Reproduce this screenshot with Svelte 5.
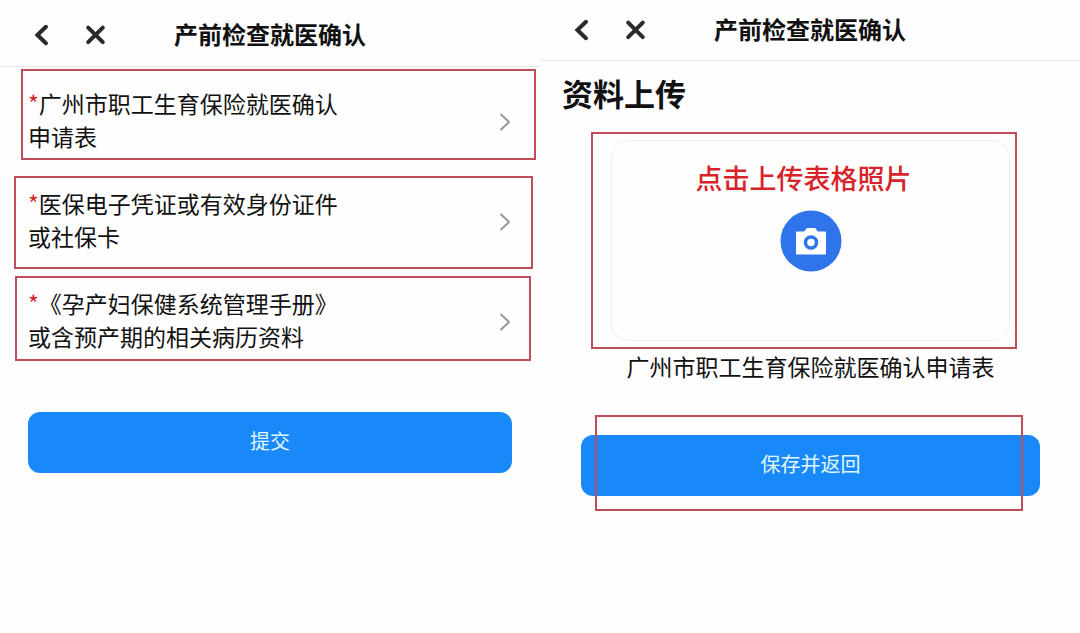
<script>
  const title = '产前检查就医确认';
  const documents = [
    { lines: ['广州市职工生育保险就医确认', '申请表'], mark: 'first' },
    { lines: ['医保电子凭证或有效身份证件', '或社保卡'], mark: 'second' },
    { lines: ['《孕产妇保健系统管理手册》', '或含预产期的相关病历资料'], mark: 'third' },
  ];
</script>

{#snippet bar()}
  <div class="nav">
    <button class="icon" type="button" aria-label="返回">
      <svg width="20" height="24" viewBox="0 0 20 24"><path d="M14 3.800 5.400 12 14 20.200" /></svg>
    </button>
    <button class="icon" type="button" aria-label="关闭">
      <svg width="24" height="24" viewBox="0 0 24 24"><path d="M4.200 4.600 18.800 19.200M18.800 4.600 4.200 19.200" /></svg>
    </button>
  </div>
  <h1>{title}</h1>
{/snippet}

<main>
  <section class="screen">
    <header class="tall">{@render bar()}</header>
    <ul>
      {#each documents as doc}
        <li>
          <button class="row" type="button">
            <span class="label">
              <span class="star">*</span>{doc.lines[0]}<br />{doc.lines[1]}
            </span>
            <svg class="chevron" width="14" height="20" viewBox="0 0 14 20"><path d="M2.500 2 11 10 2.500 18" /></svg>
          </button>
          <span class="mark {doc.mark}"></span>
        </li>
      {/each}
    </ul>
    <div class="submit">
      <button class="primary" type="button">提交</button>
    </div>
  </section>

  <section class="screen">
    <header>{@render bar()}</header>
    <h2>资料上传</h2>
    <figure>
      <div class="upload">
        <button class="card" type="button">
          <span class="hint">点击上传表格照片</span>
          <svg width="62" height="62" viewBox="0 0 62 62">
            <circle cx="31" cy="31" r="30.500" fill="#2f74ea" />
            <path fill="#fff" d="M17 21.500h6.500q1 0 1.500-1l1-1.500q.5-1 1.500-1h7q1 0 1.500 1l1 1.500q.5 1 1.500 1H45q1 0 1 1v21q0 1-1 1H17q-1 0-1-1v-21q0-1 1-1z" />
            <circle cx="31" cy="32.500" r="5.500" fill="#fff" stroke="#2f74ea" stroke-width="3.500" />
          </svg>
        </button>
        <span class="mark photo"></span>
      </div>
      <figcaption>广州市职工生育保险就医确认申请表</figcaption>
    </figure>
    <div class="save">
      <button class="primary" type="button">保存并返回</button>
      <span class="mark keep"></span>
    </div>
  </section>
</main>

<style>
  :global(body) {
    margin: 0;
    background: #fefefe;
  }
  main {
    display: grid;
    grid-template-columns: 1fr 1fr;
    min-height: 100vh;
    color: #111;
    font-family: 'Noto Sans CJK SC', sans-serif;
  }
  button {
    margin: 0;
    padding: 0;
    border: 0;
    background: none;
    color: inherit;
    font: inherit;
    cursor: pointer;
  }
  svg {
    display: block;
    flex: none;
  }
  header {
    display: grid;
    grid-template-columns: 1fr auto 1fr;
    align-items: center;
    height: 60px;
    border-bottom: 1px solid #e4e4e4;
  }
  .tall {
    height: 67px;
    padding-top: 4px;
    box-sizing: border-box;
  }
  .nav {
    display: flex;
    gap: 32px;
    padding-left: 32px;
  }
  .icon path {
    fill: none;
    stroke: #2a2a2a;
    stroke-width: 4;
    stroke-linecap: round;
  }
  h1 {
    margin: 0;
    padding-bottom: 2px;
    font-size: 24px;
    line-height: 36px;
    font-weight: 700;
  }
  ul {
    margin: 0;
    padding: 5px 0 0;
    list-style: none;
  }
  li,
  .upload,
  .save {
    position: relative;
  }
  .row {
    display: flex;
    align-items: center;
    justify-content: space-between;
    width: 100%;
    height: 100px;
    padding: 0 28px;
    text-align: left;
  }
  .label {
    padding-bottom: 4px;
    font-size: 23px;
    line-height: 33px;
  }
  .star {
    color: #d8232a;
  }
  .chevron path {
    fill: none;
    stroke: #999;
    stroke-width: 2;
  }
  .mark {
    position: absolute;
    border: 2px solid #c04e5a;
    pointer-events: none;
  }
  .first {
    inset: -3px 4px 12px 21px;
  }
  .second {
    inset: 4px 7px 3px 14px;
  }
  .third {
    inset: 4px 9px 11px 15px;
  }
  .submit {
    padding: 40px 28px 0;
  }
  .primary {
    display: block;
    width: 100%;
    height: 61px;
    padding-bottom: 3px;
    border-radius: 12px;
    background: #1989fa;
    color: #e2f8ff;
    font-size: 20px;
    line-height: 30px;
  }
  h2 {
    margin: 8px 0 0 22px;
    font-size: 31px;
    line-height: 48px;
    font-weight: 700;
  }
  figure {
    margin: 23px 70px 0 71px;
  }
  .card {
    display: flex;
    flex-direction: column;
    align-items: center;
    gap: 12px;
    width: 100%;
    height: 201px;
    padding-top: 17px;
    border: 1px solid #eee;
    border-radius: 18px;
  }
  .hint {
    margin-right: 14px;
    color: #d8232a;
    font-size: 27px;
    line-height: 40px;
    font-weight: 500;
  }
  .photo {
    inset: -8px -7px -8px -20px;
  }
  figcaption {
    margin-top: 8px;
    font-size: 23px;
    line-height: 34px;
    text-align: center;
    white-space: nowrap;
  }
  .save {
    margin: 52px 40px 0 41px;
  }
  .keep {
    inset: -20px 17px -15px 14px;
  }
</style>
